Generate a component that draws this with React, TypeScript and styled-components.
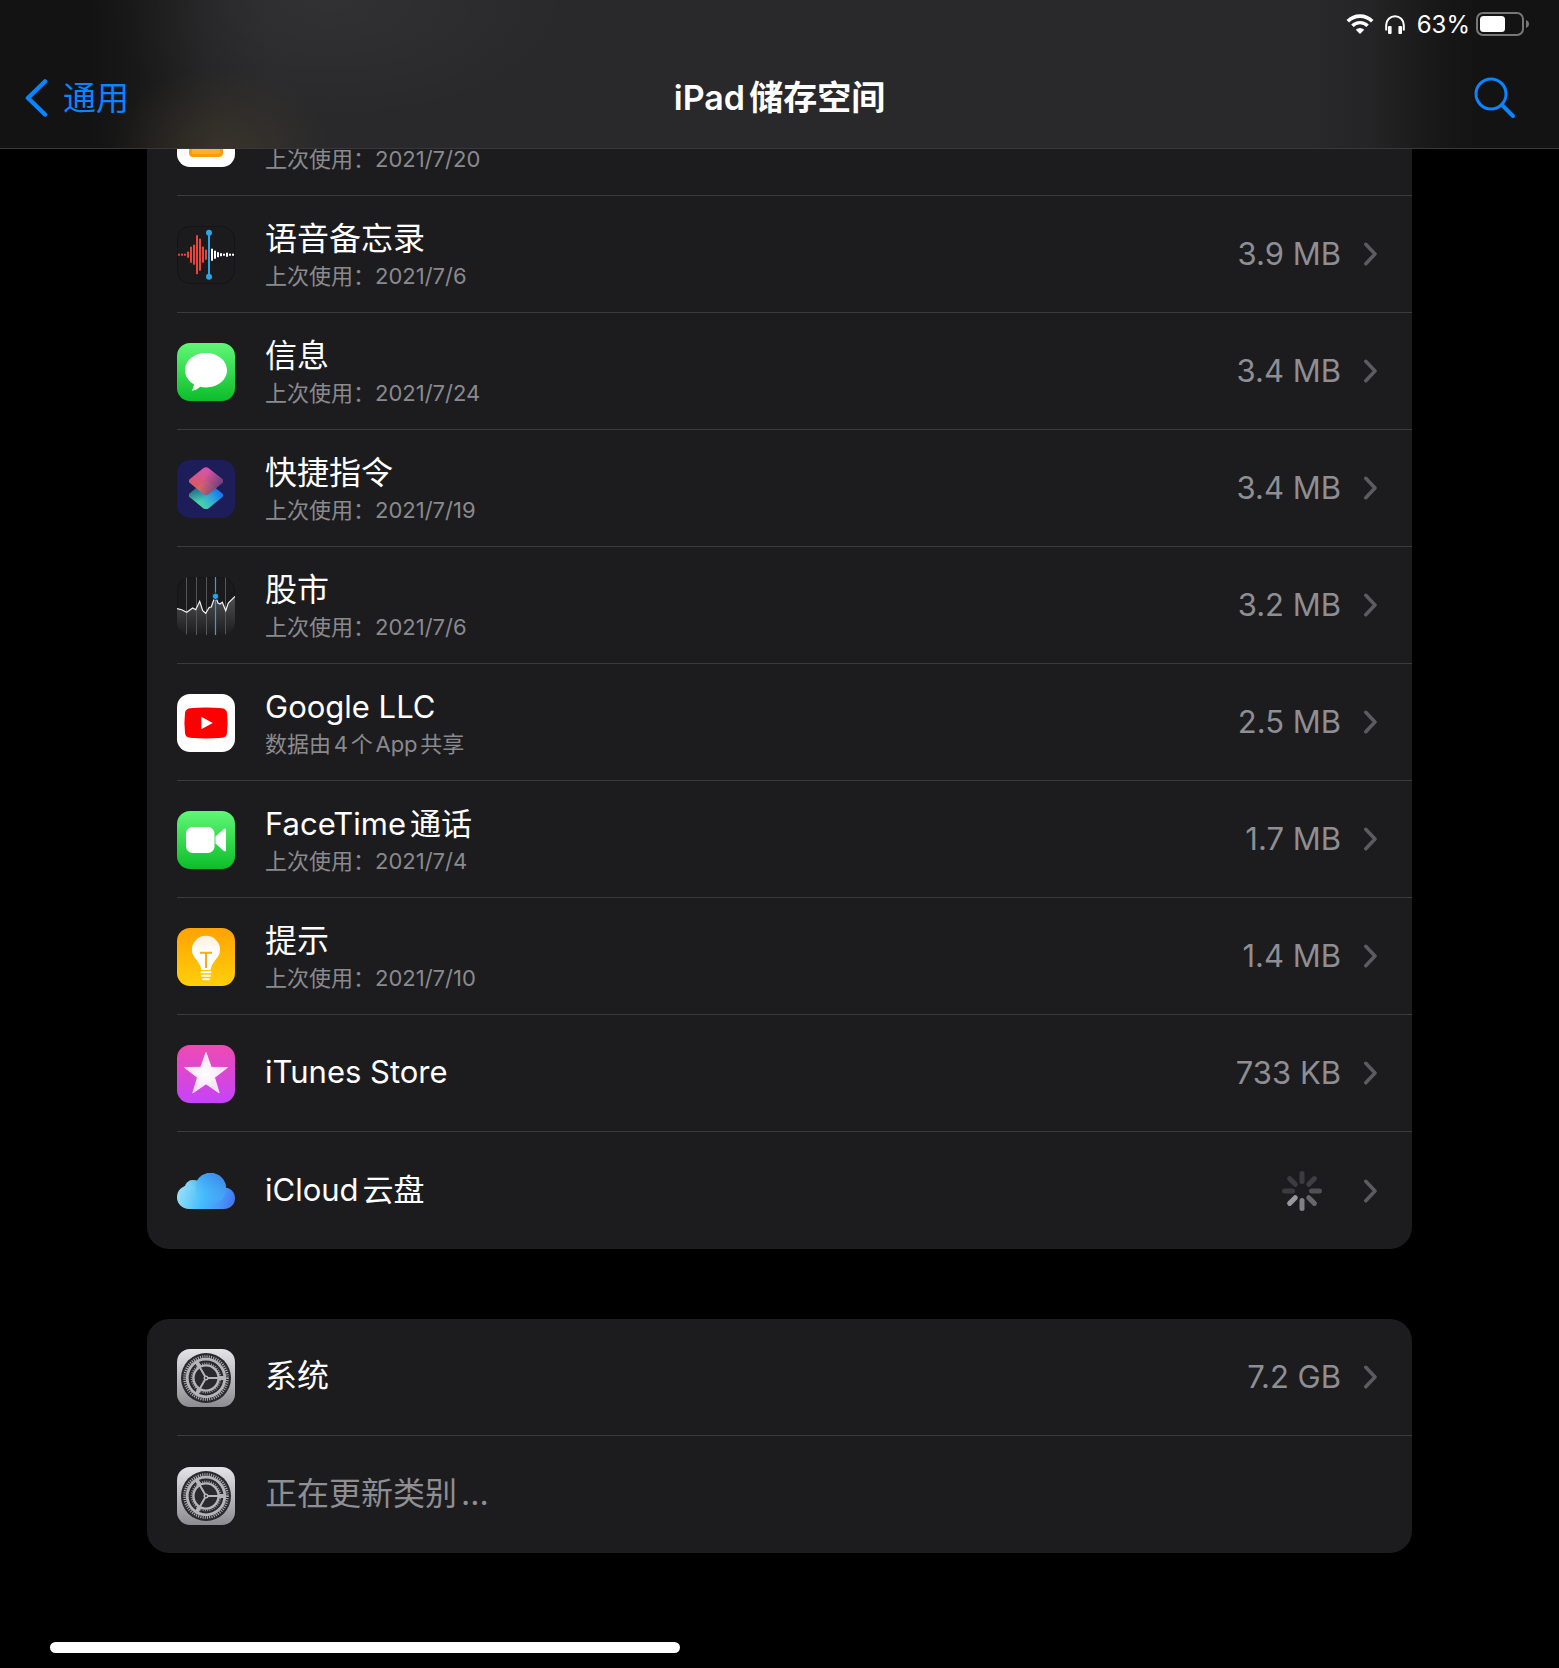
import React from 'react';
import styled, { createGlobalStyle } from 'styled-components';

const GlobalStyle = createGlobalStyle`
  * { box-sizing: border-box; }
  html, body { margin: 0; background: #000; }
  body {
    font-family: Inter, "Noto Sans CJK SC", sans-serif;
    color: #fff;
    text-autospace: normal;
    -webkit-font-smoothing: antialiased;
  }
  button { font: inherit; color: inherit; background: none; border: 0; padding: 0; margin: 0; cursor: pointer; }
`;

const Page = styled.div`
  min-height: 100vh;
  display: flex;
  flex-direction: column;
`;

const Header = styled.header`
  position: sticky;
  top: 0;
  z-index: 2;
  border-bottom: 1px solid #38383a;
  background:
    radial-gradient(ellipse 110px 80px at 220px 100%, rgba(84, 70, 46, 0.4), transparent),
    radial-gradient(ellipse 240px 120px at 330px 0, rgba(255, 255, 255, 0.04), transparent),
    linear-gradient(to right, #131313 0, #131313 90px, rgba(19, 19, 19, 0.8) 130px, rgba(19, 19, 19, 0.2) 210px, transparent 270px),
    linear-gradient(to left, #131313 0, #131313 80px, rgba(19, 19, 19, 0.8) 120px, rgba(19, 19, 19, 0.2) 190px, transparent 250px),
    #29292b;
`;

const StatusBar = styled.div`
  height: 48px;
  padding-right: 30px;
  display: flex;
  align-items: center;
  justify-content: flex-end;
  font-size: 24px;
`;

const StatusText = styled.span`
  margin: 0 6px 0 12px;
`;

const WifiSlot = styled.span`
  display: flex;
  margin-right: 11px;
`;

const NavBar = styled.nav`
  height: 100px;
  padding: 0 25px;
  display: grid;
  grid-template-columns: 1fr auto 1fr;
  align-items: center;
`;

const BackButton = styled.button`
  && { color: #0b84ff; }
  justify-self: start;
  display: flex;
  align-items: center;
  gap: 14px;
  font-size: 33px;
  line-height: 42px;
`;

const Title = styled.h1`
  margin: 0;
  font-size: 34px;
  line-height: 42px;
  font-weight: 600;
`;

const SearchButton = styled.button`
  && { padding: 0 18px; }
  justify-self: end;
  display: flex;
`;

const Main = styled.main`
  margin-top: -70px;
  padding: 0 147px;
  display: flex;
  flex-direction: column;
  gap: 70px;
`;

const Card = styled.ul`
  list-style: none;
  margin: 0;
  padding: 0 0 0 30px;
  border-radius: 22px;
  background: #1c1c1e;
`;

const Item = styled.li`
  height: 117px;
  border-bottom: 1px solid #3b3b3e;
  &:last-child { border-bottom: 0; }
`;

const RowButton = styled.button`
  && { padding: 2px 35px 0 0; }
  width: 100%;
  height: 100%;
  display: flex;
  align-items: center;
  gap: 30px;
  text-align: left;
`;

const Labels = styled.span<{ $single: boolean }>`
  flex: 1;
  display: flex;
  flex-direction: column;
  padding-bottom: ${(p) => (p.$single ? '4px' : '0')};
`;

const Name = styled.span<{ $muted?: boolean; $latin?: boolean }>`
  min-height: 42px;
  font-size: ${(p) => (p.$latin ? '31px' : '32px')};
  line-height: 42px;
  color: ${(p) => (p.$muted ? '#8e8e93' : '#fff')};
`;

const Detail = styled.span`
  font-size: 22px;
  line-height: 32px;
  color: #8a8a8e;
`;

const Trailing = styled.span`
  display: flex;
  align-items: center;
  gap: 23px;
  padding-bottom: 2px;
  font-size: 31px;
  line-height: 42px;
  color: #8e8e93;
`;

const SpinnerSlot = styled.span`
  display: flex;
  padding-right: 19px;
`;

const HomeArea = styled.footer`
  margin-top: auto;
  padding: 0 50px 15px;
`;

const HomeIndicator = styled.div`
  width: 43.2%;
  height: 11px;
  border-radius: 6px;
  background: #fff;
`;

const Icon = styled.svg.attrs({ width: 58, height: 58, viewBox: '0 0 58 58', 'aria-hidden': true })`
  display: block;
  flex: none;
  border-radius: 13px;
`;

function HomeIcon() {
  return (
    <Icon>
      <defs>
        <linearGradient id="home" x1="0" y1="0" x2="0" y2="1">
          <stop offset="0" stopColor="#ffd04a" />
          <stop offset="1" stopColor="#ffab26" />
        </linearGradient>
      </defs>
      <rect width="58" height="58" fill="#fff" />
      <path d="M13.500 24 29 11 44.500 24V44a2.500 2.500 0 0 1-2.500 2.500H16a2.500 2.500 0 0 1-2.500-2.500Z" fill="url(#home)" stroke="#ff9a0c" strokeWidth="3" />
    </Icon>
  );
}

const redBars = [2, 2, 2, 6, 16, 20, 39, 32, 16, 10];
const whiteBars = [12, 8, 5, 3, 2, 4, 2, 2];

function VoiceMemosIcon() {
  return (
    <Icon>
      <rect x="0.5" y="0.5" width="57" height="57" rx="12.500" fill="#1b1b1d" stroke="#151517" />
      {redBars.map((h, i) => (
        <rect key={i} x={1 + i * 3} y={28.7 - h / 2} width="2" height={h} fill="#e8443a" />
      ))}
      {whiteBars.map((h, i) => (
        <rect key={i} x={34 + i * 3} y={28.7 - h / 2} width="2" height={h} fill="#fff" />
      ))}
      <path d="M32 7V51" stroke="#2aa5ea" strokeWidth="2" />
      <circle cx="32" cy="6.700" r="3" fill="#2aa5ea" />
      <circle cx="32" cy="50.700" r="3" fill="#2aa5ea" />
    </Icon>
  );
}

function GreenDefs({ id }: { id: string }) {
  return (
    <defs>
      <linearGradient id={id} x1="0" y1="0" x2="0" y2="1">
        <stop offset="0" stopColor="#60f777" />
        <stop offset="1" stopColor="#0cbd29" />
      </linearGradient>
    </defs>
  );
}

function MessagesIcon() {
  return (
    <Icon>
      <GreenDefs id="msg" />
      <rect width="58" height="58" fill="url(#msg)" />
      <path d="M29 10C17.300 10 8 17.600 8 27.200c0 5.900 3.500 11 8.900 14.100 0 2.200-.9 4.400-2.300 6.500 3.500-.4 6.300-1.800 8.500-4 1.900.4 3.900.6 5.900.6 11.700 0 21-7.600 21-17.200S40.700 10 29 10Z" fill="#fff" />
    </Icon>
  );
}

const lowerTile = 'M25.900 22.700a5 5 0 0 1 6.200 0l13 10.600a2.500 2.500 0 0 1 0 4l-13 10.600a5 5 0 0 1-6.200 0l-13-10.600a2.500 2.500 0 0 1 0-4Z';
const upperTile = 'M25.900 8.500a5 5 0 0 1 6.200 0l13 10.600a2.500 2.500 0 0 1 0 4l-13 10.600a5 5 0 0 1-6.200 0l-13-10.600a2.500 2.500 0 0 1 0-4Z';

function ShortcutsIcon() {
  return (
    <Icon>
      <defs>
        <linearGradient id="scTop" x1="0.600" y1="0" x2="0.350" y2="0.800">
          <stop offset="0" stopColor="#f45ccb" />
          <stop offset="1" stopColor="#fb6656" />
        </linearGradient>
        <linearGradient id="scShade" x1="0.450" y1="0.350" x2="1" y2="0.600">
          <stop offset="0" stopColor="#5b3a80" stopOpacity="0" />
          <stop offset="1" stopColor="#4b3a80" stopOpacity="0.850" />
        </linearGradient>
        <linearGradient id="scBottom" x1="0.150" y1="0.800" x2="0.900" y2="0.300">
          <stop offset="0" stopColor="#4fe39a" />
          <stop offset="0.500" stopColor="#35b2d0" />
          <stop offset="1" stopColor="#1372f5" />
        </linearGradient>
        <linearGradient id="scDark" x1="0" y1="0.200" x2="0.350" y2="0.700">
          <stop offset="0" stopColor="#1f3e70" stopOpacity="0.900" />
          <stop offset="1" stopColor="#1f3e70" stopOpacity="0" />
        </linearGradient>
      </defs>
      <rect width="58" height="58" fill="#1c1d59" />
      <path d={lowerTile} fill="url(#scBottom)" />
      <path d={lowerTile} fill="url(#scDark)" />
      <path d={upperTile} fill="url(#scTop)" fillOpacity="0.850" />
      <path d={upperTile} fill="url(#scShade)" />
    </Icon>
  );
}

const stockLine = '0,31.700 4.700,32.700 9.700,35.300 15.700,31 18.700,32.700 22.700,24.300 25.700,33.700 28.700,36.300 32.300,30.300 34.300,30 36.300,24.300 38.300,19 41,26 43,27 45.300,25.300 48.700,33.700 51.300,26 58,19.300';

function StocksIcon() {
  return (
    <Icon>
      <defs>
        <linearGradient id="stk" x1="0" y1="0" x2="0" y2="1">
          <stop offset="0" stopColor="#505052" />
          <stop offset="1" stopColor="#1c1c1e" />
        </linearGradient>
      </defs>
      <rect x="0.500" y="0.500" width="57" height="57" rx="12.500" fill="#1a1a1c" stroke="#151517" />
      <polygon points={`${stockLine} 58,58 0,58`} fill="url(#stk)" />
      <path d="M9.500 0V58M19.500 0V58M29.500 0V58M48.500 0V58" stroke="#555557" />
      <polyline points={stockLine} fill="none" stroke="#f2f2f2" strokeWidth="1.200" />
      <path d="M38.500 0V58" stroke="#1ea7ee" strokeWidth="1.200" />
      <circle cx="38.500" cy="19.300" r="3.200" fill="#1ea7ee" stroke="#1a1a1c" />
    </Icon>
  );
}

function YouTubeIcon() {
  return (
    <Icon>
      <rect width="58" height="58" fill="#fff" />
      <path d="M13 14.200Q29 12.900 45 14.200q4.500.4 5 4.800 1.200 10 0 20-.5 4.400-5 4.800-16 1.300-32 0-4.500-.4-5-4.800-1.200-10 0-20 .5-4.400 5-4.800Z" fill="#f00" />
      <path d="M24.300 22.700 35.700 29 24.300 35.300Z" fill="#fff" />
    </Icon>
  );
}

function FaceTimeIcon() {
  return (
    <Icon>
      <GreenDefs id="ft" />
      <rect width="58" height="58" fill="url(#ft)" />
      <rect x="9" y="16" width="28.500" height="26" rx="6.500" fill="#fff" />
      <path d="M38.500 25.600 46.600 18.200q2.400-1.700 2.400 1V38.800q0 2.700-2.400 1L38.500 32.400Z" fill="#fff" />
    </Icon>
  );
}

function TipsIcon() {
  return (
    <Icon>
      <defs>
        <linearGradient id="tips" x1="0" y1="0" x2="0" y2="1">
          <stop offset="0" stopColor="#ffa204" />
          <stop offset="1" stopColor="#ffcf0a" />
        </linearGradient>
        <linearGradient id="bulb" x1="0" y1="0" x2="0" y2="1">
          <stop offset="0" stopColor="#fff0dc" />
          <stop offset="0.500" stopColor="#fff" />
        </linearGradient>
      </defs>
      <rect width="58" height="58" fill="url(#tips)" />
      <path d="M29 7.800A14.100 14.100 0 0 0 14.900 22c0 7.600 8 11 9.300 19.200q.2.800 1 .8h7.600q.8 0 1-.8C35.100 33 43.100 29.600 43.100 22A14.100 14.100 0 0 0 29 7.800Z" fill="url(#bulb)" />
      <path d="M23 24.800H35M29 24.800V40" stroke="#f7ac1c" strokeWidth="2" fill="none" />
      <path d="M24.500 44.300H33.500M25 47.800H33M26 51.200H32" stroke="#fff" strokeWidth="2" strokeLinecap="round" />
    </Icon>
  );
}

function ITunesIcon() {
  return (
    <Icon>
      <defs>
        <linearGradient id="itunes" x1="0" y1="0" x2="0" y2="1">
          <stop offset="0" stopColor="#ee4bb2" />
          <stop offset="1" stopColor="#c643f7" />
        </linearGradient>
        <radialGradient id="star" cx="0.500" cy="0.520" r="0.500">
          <stop offset="0" stopColor="#fff" />
          <stop offset="0.450" stopColor="#fff" stopOpacity="0.920" />
          <stop offset="1" stopColor="#fff" stopOpacity="0.780" />
        </radialGradient>
      </defs>
      <rect width="58" height="58" fill="url(#itunes)" />
      <path d="M29 7.500 34.300 22.300 50.500 22.500 37.600 32.600 42.200 48 29 38.900 15.800 48 20.400 32.600 7.500 22.500 23.700 22.300Z" fill="url(#star)" stroke="#fff" strokeOpacity="0.700" strokeLinejoin="round" />
    </Icon>
  );
}

const CloudSvg = styled.svg`
  display: block;
  flex: none;
`;

function CloudIcon() {
  return (
    <CloudSvg width="58" height="38" viewBox="0 0 58 38" aria-hidden="true">
      <defs>
        <linearGradient id="cloud" gradientUnits="userSpaceOnUse" x1="2" y1="16" x2="56" y2="32">
          <stop offset="0" stopColor="#98e0f7" />
          <stop offset="0.450" stopColor="#45befe" />
          <stop offset="0.800" stopColor="#4794f8" />
          <stop offset="1" stopColor="#4674f0" />
        </linearGradient>
        <linearGradient id="puff" gradientUnits="userSpaceOnUse" x1="26" y1="30" x2="44" y2="3">
          <stop offset="0" stopColor="#44c0ff" stopOpacity="0" />
          <stop offset="0.550" stopColor="#42a6f4" stopOpacity="0.800" />
          <stop offset="1" stopColor="#3d8be8" />
        </linearGradient>
        <linearGradient id="small" gradientUnits="userSpaceOnUse" x1="12" y1="20" x2="24" y2="9">
          <stop offset="0" stopColor="#8ddcf8" stopOpacity="0" />
          <stop offset="1" stopColor="#50b4ea" />
        </linearGradient>
      </defs>
      <g fill="url(#cloud)">
        <circle cx="11.800" cy="24.200" r="11.800" />
        <circle cx="16" cy="15.500" r="8.500" />
        <circle cx="33.500" cy="15.500" r="15.500" />
        <circle cx="47.200" cy="25.200" r="10.800" />
        <path d="M12 18H47V36H12Z" />
      </g>
      <circle cx="33.500" cy="15.500" r="15.500" fill="url(#puff)" />
      <path d="M8.500 12A8.500 8.500 0 0 1 21.500 8.800Q18.500 12 18.300 17 12 17 8.500 12Z" fill="url(#small)" />
    </CloudSvg>
  );
}

function GearIcon({ id }: { id: string }) {
  return (
    <Icon>
      <defs>
        <linearGradient id={id} x1="0" y1="0" x2="0" y2="1">
          <stop offset="0" stopColor="#e4e4e9" />
          <stop offset="1" stopColor="#8c8c92" />
        </linearGradient>
      </defs>
      <rect width="58" height="58" fill={`url(#${id})`} />
      <g fill="none">
        <circle cx="29" cy="29" r="25" fill="#2a2a2d" />
        <circle cx="29" cy="29" r="21.500" stroke="#b4b4b9" strokeWidth="2.600" strokeDasharray="1 1.251" />
        <circle cx="29" cy="29" r="18.800" stroke="#b4b4b9" strokeWidth="2.800" />
        <circle cx="29" cy="29" r="14.500" stroke="#97979c" strokeWidth="1.800" strokeDasharray="1 1.277" />
        <circle cx="29" cy="29" r="12.600" stroke="#b4b4b9" strokeWidth="2.400" />
        <path d="M29 29H48M29 29 19.500 12.500M29 29 19.500 45.500" stroke="#b4b4b9" strokeWidth="2" />
        <path d="M43 29H47M22 16.900 20 13.400M22 41.100 20 44.600" stroke="#b4b4b9" strokeWidth="4" strokeLinecap="round" />
        <circle cx="29" cy="29" r="2.500" fill="#b4b4b9" />
        <circle cx="29" cy="29" r="1" fill="#2a2a2d" />
      </g>
    </Icon>
  );
}

function Chevron() {
  return (
    <svg width="13" height="24" viewBox="0 0 13 24" fill="none" aria-hidden="true">
      <path d="M1.800 2.300 11 12 1.800 21.700" stroke="#5c5c60" strokeWidth="3.500" strokeLinecap="round" strokeLinejoin="round" />
    </svg>
  );
}

const spokes = ['#3c3c40', '#3f3f43', '#515155', '#66666b', '#808086', '#98989e', '#3c3c40', '#3c3c40'];

function Spinner() {
  return (
    <svg width="40" height="40" viewBox="0 0 40 40" role="img" aria-label="载入中">
      {spokes.map((c, i) => (
        <path key={i} d="M20 2.500V10.500" stroke={c} strokeWidth="5" strokeLinecap="round" transform={`rotate(${i * 45} 20 20)`} />
      ))}
    </svg>
  );
}

type RowData = {
  icon: React.ReactNode;
  name?: string;
  detail?: string;
  size?: string;
  loading?: boolean;
  muted?: boolean;
};

const apps: RowData[] = [
  { icon: <HomeIcon />, name: '', detail: '上次使用：2021/7/20' },
  { icon: <VoiceMemosIcon />, name: '语音备忘录', detail: '上次使用：2021/7/6', size: '3.9 MB' },
  { icon: <MessagesIcon />, name: '信息', detail: '上次使用：2021/7/24', size: '3.4 MB' },
  { icon: <ShortcutsIcon />, name: '快捷指令', detail: '上次使用：2021/7/19', size: '3.4 MB' },
  { icon: <StocksIcon />, name: '股市', detail: '上次使用：2021/7/6', size: '3.2 MB' },
  { icon: <YouTubeIcon />, name: 'Google LLC', detail: '数据由4个App共享', size: '2.5 MB' },
  { icon: <FaceTimeIcon />, name: 'FaceTime通话', detail: '上次使用：2021/7/4', size: '1.7 MB' },
  { icon: <TipsIcon />, name: '提示', detail: '上次使用：2021/7/10', size: '1.4 MB' },
  { icon: <ITunesIcon />, name: 'iTunes Store', size: '733 KB' },
  { icon: <CloudIcon />, name: 'iCloud云盘', loading: true },
];

const system: RowData[] = [
  { icon: <GearIcon id="gear1" />, name: '系统', size: '7.2 GB' },
  { icon: <GearIcon id="gear2" />, name: '正在更新类别...', muted: true },
];

function Row({ icon, name = '', detail, size, loading, muted }: RowData) {
  return (
    <Item>
      <RowButton type="button">
        {icon}
        <Labels $single={!detail}>
          <Name $muted={muted} $latin={/[A-Za-z]/.test(name)}>{name}</Name>
          {detail && <Detail>{detail}</Detail>}
        </Labels>
        {(size || loading) && (
          <Trailing>
            {loading ? <SpinnerSlot><Spinner /></SpinnerSlot> : size}
            <Chevron />
          </Trailing>
        )}
      </RowButton>
    </Item>
  );
}

export default function App() {
  return (
    <Page lang="zh-CN">
      <GlobalStyle />
      <Header>
        <StatusBar>
          <WifiSlot>
            <svg width="28" height="20" viewBox="0 0 28 20" fill="none" aria-hidden="true">
              <path d="M1.800 7.200a17.300 17.300 0 0 1 24.400 0" stroke="#fff" strokeWidth="3.600" />
              <path d="M6.400 11.800a10.800 10.800 0 0 1 15.200 0" stroke="#fff" strokeWidth="3.400" />
              <path d="M14 20 9.800 15.700a6 6 0 0 1 8.400 0Z" fill="#fff" />
            </svg>
          </WifiSlot>
          <svg width="20" height="19" viewBox="0 0 20 19" fill="none" aria-hidden="true">
            <path d="M1.200 15.500V10a8.800 8.800 0 0 1 17.600 0V15.500" stroke="#fff" strokeWidth="2" />
            <rect x="3" y="11" width="3.600" height="8" rx="1" fill="#fff" />
            <rect x="13.400" y="11" width="3.600" height="8" rx="1" fill="#fff" />
          </svg>
          <StatusText>63%</StatusText>
          <svg width="53" height="24" viewBox="0 0 53 24" fill="none" aria-hidden="true">
            <rect x="1" y="1" width="46" height="22" rx="6" stroke="#77777a" strokeWidth="2" />
            <rect x="4" y="4" width="25" height="16" rx="3.500" fill="#fff" />
            <path d="M50 8q3 1.200 3 4t-3 4Z" fill="#77777a" />
          </svg>
        </StatusBar>
        <NavBar>
          <BackButton type="button">
            <svg width="24" height="38" viewBox="0 0 24 38" fill="none" aria-hidden="true">
              <path d="M20 2.500 3 19 20 35.500" stroke="#0b84ff" strokeWidth="4.500" strokeLinecap="round" strokeLinejoin="round" />
            </svg>
            通用
          </BackButton>
          <Title>iPad储存空间</Title>
          <SearchButton type="button" aria-label="搜索">
            <svg width="42" height="42" viewBox="0 0 42 42" fill="none" aria-hidden="true">
              <circle cx="17" cy="17" r="15" stroke="#0b84ff" strokeWidth="3" />
              <path d="M28 28 39 39" stroke="#0b84ff" strokeWidth="4" strokeLinecap="round" />
            </svg>
          </SearchButton>
        </NavBar>
      </Header>
      <Main>
        <Card>{apps.map((r, i) => <Row key={i} {...r} />)}</Card>
        <Card>{system.map((r, i) => <Row key={i} {...r} />)}</Card>
      </Main>
      <HomeArea>
        <HomeIndicator />
      </HomeArea>
    </Page>
  );
}
